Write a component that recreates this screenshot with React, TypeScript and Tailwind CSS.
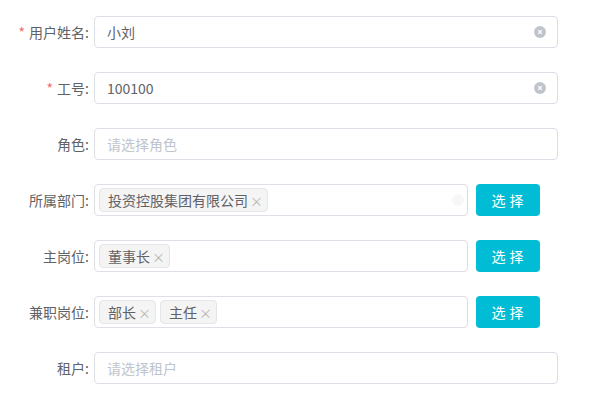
const font = { fontFamily: '"Noto Sans CJK SC", "Microsoft YaHei", sans-serif' };

function Label({ text, required }: { text: string; required?: boolean }) {
  return (
    <div className="w-[94px] shrink-0 pr-[5px] text-right text-[14px] text-[#606266]">
      {required && <span className="mr-[4px] text-[#f56c6c]">*</span>}
      {text}:
    </div>
  );
}

function ClearIcon({ faint }: { faint?: boolean }) {
  return (
    <svg width="12" height="12" viewBox="0 0 12 12" className="shrink-0">
      <circle cx="6" cy="6" r="6" fill={faint ? "#f7f7f7" : "#c0c4cc"} />
      {!faint && <path d="M4.2 4.2 L7.8 7.8 M7.8 4.2 L4.2 7.8" stroke="#fff" strokeWidth="1.2" />}
    </svg>
  );
}

function Tag({ text }: { text: string }) {
  return (
    <span className="flex h-[24px] items-center rounded-[4px] border border-[#e4e4e4] bg-[#f4f4f5] pl-[8px] pr-[4px] text-[14px] text-[#606266]">
      {text}
      <span className="ml-[2px] text-[13px] leading-none text-[#b4b4b4]">×</span>
    </span>
  );
}

function TextRow({ label, value, required, placeholder }: { label: string; value?: string; required?: boolean; placeholder?: string }) {
  return (
    <div className="mb-[24px] flex items-center">
      <Label text={label} required={required} />
      <div className="flex h-[32px] w-[464px] items-center rounded-[4px] border border-[#dcdfe6] bg-white pl-[12px] pr-[11px] text-[14px]">
        <span className={value ? "flex-1 text-[#606266]" : "flex-1 text-[#c0c4cc]"}>{value ?? placeholder}</span>
        {value && <ClearIcon />}
      </div>
    </div>
  );
}

function TagRow({ label, tags, faint }: { label: string; tags: string[]; faint?: boolean }) {
  return (
    <div className="mb-[24px] flex items-center">
      <Label text={label} />
      <div className="flex h-[32px] w-[374px] items-center gap-[4px] rounded-[4px] border border-[#dcdfe6] bg-white pl-[4px] pr-[3px]">
        {tags.map((t) => (
          <Tag key={t} text={t} />
        ))}
        <span className="flex-1" />
        {faint && <ClearIcon faint />}
      </div>
      <button className="ml-[8px] h-[32px] w-[64px] rounded-[4px] bg-[#00bcd4] pl-[3px] text-[14px] tracking-[4px] text-white">
        选择
      </button>
    </div>
  );
}

export default function App() {
  return (
    <div className="h-[415px] w-[616px] bg-white pt-[16px]" style={font}>
      <TextRow label="用户姓名" value="小刘" required />
      <TextRow label="工号" value="100100" required />
      <TextRow label="角色" placeholder="请选择角色" />
      <TagRow label="所属部门" tags={["投资控股集团有限公司"]} faint />
      <TagRow label="主岗位" tags={["董事长"]} />
      <TagRow label="兼职岗位" tags={["部长", "主任"]} />
      <TextRow label="租户" placeholder="请选择租户" />
    </div>
  );
}
